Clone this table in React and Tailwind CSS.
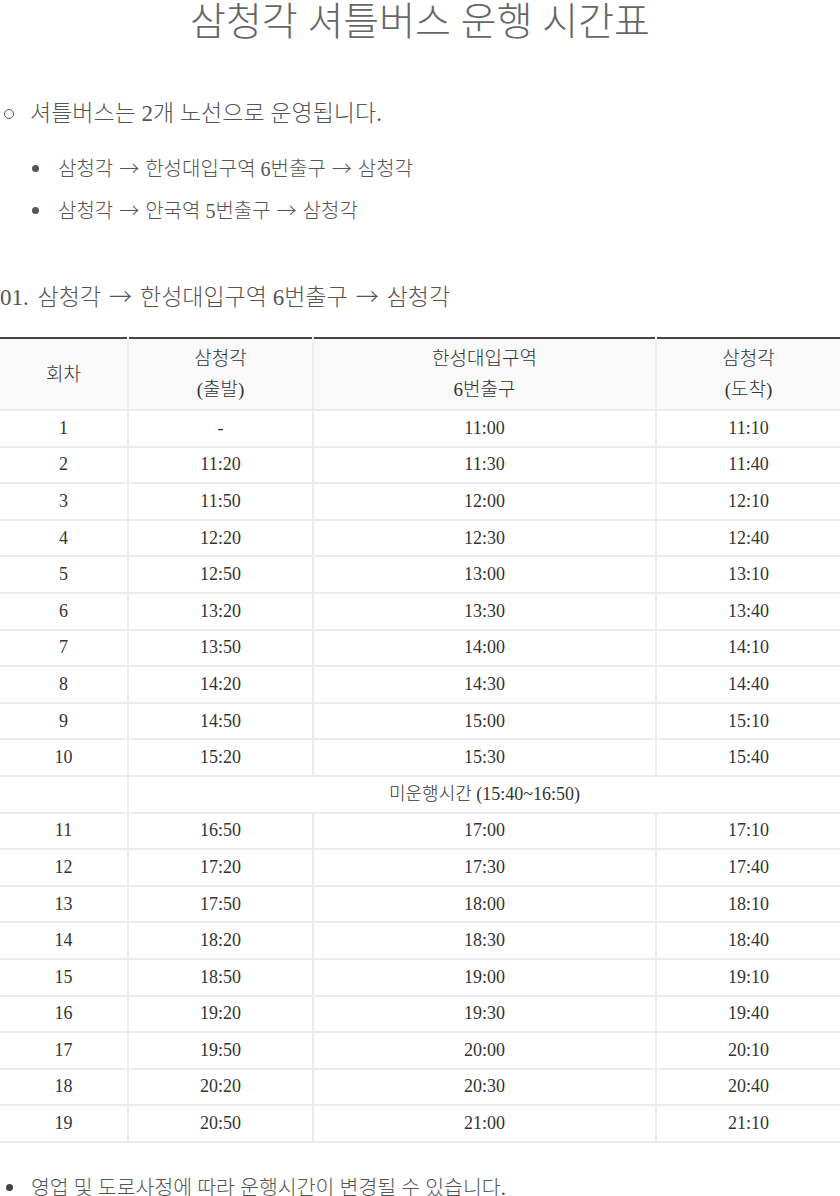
import React from 'react';

const rows = [
  ['1', '-', '11:00', '11:10'],
  ['2', '11:20', '11:30', '11:40'],
  ['3', '11:50', '12:00', '12:10'],
  ['4', '12:20', '12:30', '12:40'],
  ['5', '12:50', '13:00', '13:10'],
  ['6', '13:20', '13:30', '13:40'],
  ['7', '13:50', '14:00', '14:10'],
  ['8', '14:20', '14:30', '14:40'],
  ['9', '14:50', '15:00', '15:10'],
  ['10', '15:20', '15:30', '15:40'],
  null,
  ['11', '16:50', '17:00', '17:10'],
  ['12', '17:20', '17:30', '17:40'],
  ['13', '17:50', '18:00', '18:10'],
  ['14', '18:20', '18:30', '18:40'],
  ['15', '18:50', '19:00', '19:10'],
  ['16', '19:20', '19:30', '19:40'],
  ['17', '19:50', '20:00', '20:10'],
  ['18', '20:20', '20:30', '20:40'],
  ['19', '20:50', '21:00', '21:10'],
];

const cell = 'border-b-2 border-l-2 border-[#ececec] first:border-l-0 text-center';

// arrow drawn with the CJK font, it is wider than the serif one
const Arrow = ({ wide }) => (
  <span className={`font-['Noto_Sans_CJK_KR',sans-serif] font-light ${wide ? 'mx-[8px]' : 'mx-[6px]'}`}>→</span>
);

const App = () => {
  return (
    <div className="w-[840px] font-['Liberation_Serif','Noto_Sans_CJK_KR',sans-serif] font-light text-[#444]">
      {/* Title */}
      <h1 className="text-center text-[39px] leading-[44px] text-[#666]">
        삼청각 셔틀버스 운행 시간표
      </h1>

      {/* Intro */}
      <div className="mt-[55px] flex items-center text-[23px] leading-[30px] text-[#555]">
        <span className="ml-[4px] w-[10px] h-[10px] rounded-full border-[1.5px] border-[#555]"></span>
        <span className="ml-[16px]">셔틀버스는 2개 노선으로 운영됩니다.</span>
      </div>
      <ul className="mt-[27px] text-[20px] leading-[24px] text-[#555]">
        <li className="flex items-center">
          <span className="ml-[32px] w-[7px] h-[7px] rounded-full bg-[#555]"></span>
          <span className="ml-[19px]">삼청각<Arrow />한성대입구역 6번출구<Arrow />삼청각</span>
        </li>
        <li className="flex items-center mt-[17px]">
          <span className="ml-[32px] w-[7px] h-[7px] rounded-full bg-[#555]"></span>
          <span className="ml-[19px]">삼청각<Arrow />안국역 5번출구<Arrow />삼청각</span>
        </li>
      </ul>

      {/* Route heading */}
      <h2 className="mt-[57px] text-[23px] leading-[30px] text-[#555]">
        01. <span className="ml-[3px]">삼청각</span><Arrow wide />한성대입구역 6번출구<Arrow wide />삼청각
      </h2>

      {/* Timetable */}
      <table className="mt-[24px] w-full border-collapse border-t-2 border-t-[#444] border-b-2 border-b-[#222] text-[18px] text-[#333]">
        <colgroup>
          <col className="w-[128px]" />
          <col className="w-[185px]" />
          <col className="w-[343px]" />
          <col className="w-[184px]" />
        </colgroup>
        <thead>
          <tr className="h-[72px] bg-[#f9f9f9] text-[19px] leading-[31px]">
            <th className={`${cell} font-light`}>회차</th>
            <th className={`${cell} font-light`}>삼청각<br />(출발)</th>
            <th className={`${cell} font-light`}>한성대입구역<br />6번출구</th>
            <th className={`${cell} font-light`}>삼청각<br />(도착)</th>
          </tr>
        </thead>
        <tbody>
          {rows.map((r, i) =>
            r ? (
              <tr key={i} className="h-[36.6px]">
                {r.map((v, j) => (
                  <td key={j} className={cell}>{v}</td>
                ))}
              </tr>
            ) : (
              <tr key={i} className="h-[36.6px]">
                <td className={cell}></td>
                <td className={cell} colSpan={3}>미운행시간 (15:40~16:50)</td>
              </tr>
            )
          )}
        </tbody>
      </table>

      {/* Footer note */}
      <div className="mt-[33px] flex items-center text-[20.5px] leading-[24px] text-[#555]">
        <span className="ml-[6px] w-[7px] h-[7px] rounded-full bg-[#444]"></span>
        <span className="ml-[18px]">영업 및 도로사정에 따라 운행시간이 변경될 수 있습니다.</span>
      </div>
    </div>
  );
};

export default App;
